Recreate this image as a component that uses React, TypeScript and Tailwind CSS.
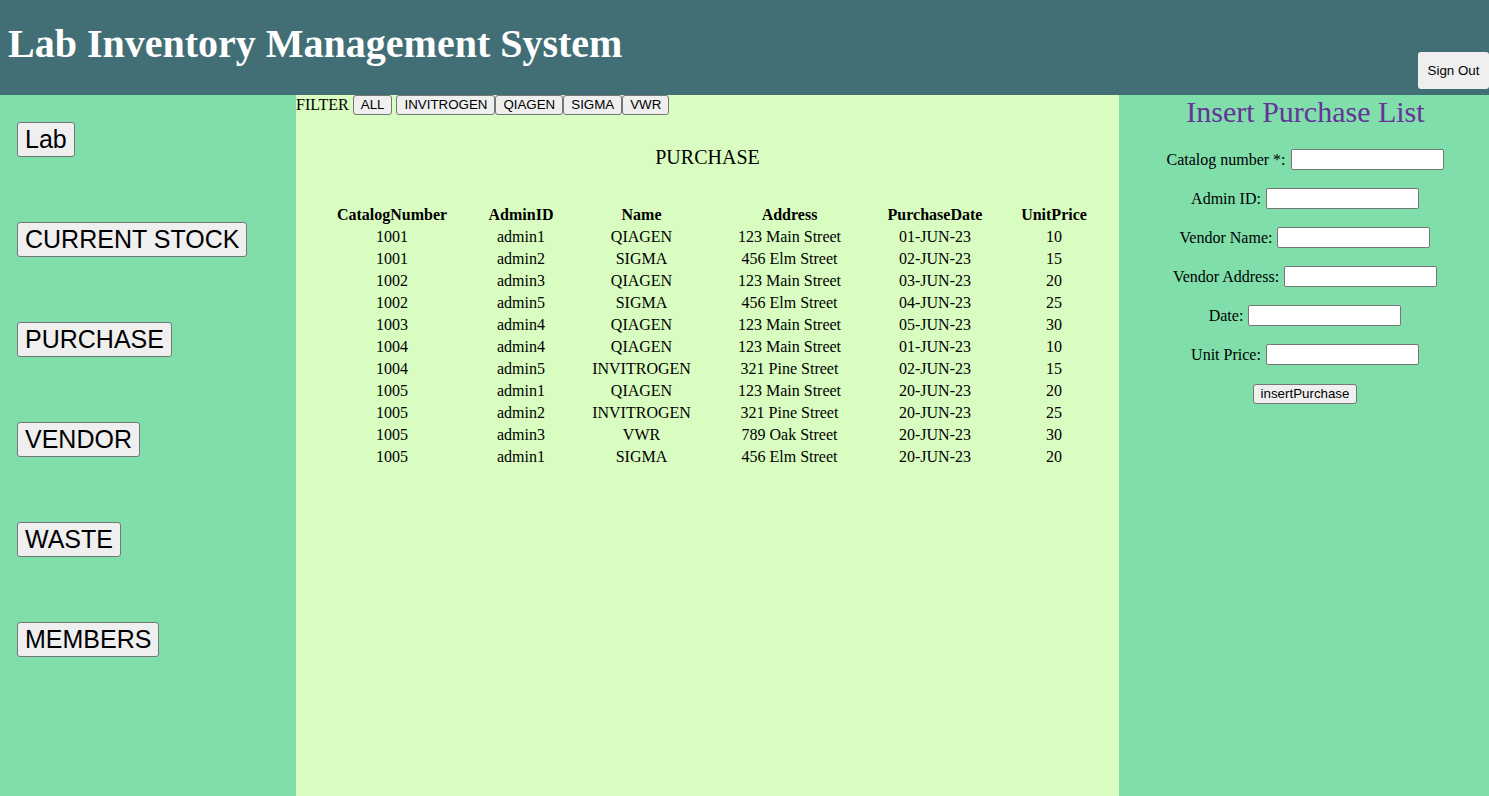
import React, { useState } from "react";

interface Purchase {
  catalog: number;
  admin: string;
  name: string;
  address: string;
  date: string;
  price: number;
}

const purchases: Purchase[] = [
  { catalog: 1001, admin: "admin1", name: "QIAGEN", address: "123 Main Street", date: "01-JUN-23", price: 10 },
  { catalog: 1001, admin: "admin2", name: "SIGMA", address: "456 Elm Street", date: "02-JUN-23", price: 15 },
  { catalog: 1002, admin: "admin3", name: "QIAGEN", address: "123 Main Street", date: "03-JUN-23", price: 20 },
  { catalog: 1002, admin: "admin5", name: "SIGMA", address: "456 Elm Street", date: "04-JUN-23", price: 25 },
  { catalog: 1003, admin: "admin4", name: "QIAGEN", address: "123 Main Street", date: "05-JUN-23", price: 30 },
  { catalog: 1004, admin: "admin4", name: "QIAGEN", address: "123 Main Street", date: "01-JUN-23", price: 10 },
  { catalog: 1004, admin: "admin5", name: "INVITROGEN", address: "321 Pine Street", date: "02-JUN-23", price: 15 },
  { catalog: 1005, admin: "admin1", name: "QIAGEN", address: "123 Main Street", date: "20-JUN-23", price: 20 },
  { catalog: 1005, admin: "admin2", name: "INVITROGEN", address: "321 Pine Street", date: "20-JUN-23", price: 25 },
  { catalog: 1005, admin: "admin3", name: "VWR", address: "789 Oak Street", date: "20-JUN-23", price: 30 },
  { catalog: 1005, admin: "admin1", name: "SIGMA", address: "456 Elm Street", date: "20-JUN-23", price: 20 },
];

const navItems = ["Lab", "CURRENT STOCK", "PURCHASE", "VENDOR", "WASTE", "MEMBERS"];

const formFields = [
  "Catalog number *:",
  "Admin ID:",
  "Vendor Name:",
  "Vendor Address:",
  "Date:",
  "Unit Price:",
];

// plain browser-default looking button
const smallBtn =
  "h-[20px] px-[7px] text-[13.33px] leading-[16px] font-['Liberation_Sans',Arial,sans-serif] text-black bg-[#efefef] border border-[#767676] rounded-[3px] align-top";

const App = () => {
  const [filter, setFilter] = useState("ALL");

  const rows =
    filter === "ALL" ? purchases : purchases.filter((p) => p.name === filter);

  return (
    <div className="h-screen flex flex-col font-['Liberation_Serif','Times_New_Roman',serif] text-black">
      {/* Header */}
      <header className="h-[95px] shrink-0 bg-[#426f75] flex justify-between">
        <h1 className="pl-[8px] pt-[21px] text-[40px] leading-[46px] font-bold text-white">
          Lab Inventory Management System
        </h1>
        <button className="self-end mb-[6px] h-[37px] w-[71px] bg-[#efefef] rounded-[3px] text-[13.33px] font-['Liberation_Sans',Arial,sans-serif] text-black">
          Sign Out
        </button>
      </header>

      <div className="flex-1 flex min-h-0">
        {/* Sidebar */}
        <nav className="w-[296px] shrink-0 bg-[#7fdeaa] pt-[27px] pl-[17px] flex flex-col items-start gap-[65px]">
          {navItems.map((item) => (
            <button
              key={item}
              className="h-[35px] px-[7px] text-[25px] leading-[29px] font-['Liberation_Sans',Arial,sans-serif] text-black bg-[#efefef] border border-[#767676] rounded-[3px]"
            >
              {item}
            </button>
          ))}
        </nav>

        {/* Main */}
        <main className="flex-1 bg-[#d9fdc1]">
          <div className="h-[21px] text-[16px] leading-[20px] whitespace-nowrap">
            FILTER{" "}
            <button className={smallBtn} onClick={() => setFilter("ALL")}>
              ALL
            </button>{" "}
            <button className={smallBtn} onClick={() => setFilter("INVITROGEN")}>
              INVITROGEN
            </button>
            <button className={smallBtn} onClick={() => setFilter("QIAGEN")}>
              QIAGEN
            </button>
            <button className={smallBtn} onClick={() => setFilter("SIGMA")}>
              SIGMA
            </button>
            <button className={smallBtn} onClick={() => setFilter("VWR")}>
              VWR
            </button>
          </div>

          <h3 className="mt-[30px] text-center text-[20px] leading-[22px]">PURCHASE</h3>

          <table className="mx-auto mt-[36px] border-collapse text-[16px] leading-[22px] text-center">
            <thead>
              <tr className="h-[22px] font-bold">
                <th className="w-[161px] p-0">CatalogNumber</th>
                <th className="w-[97px] p-0">AdminID</th>
                <th className="w-[144px] p-0">Name</th>
                <th className="w-[152px] p-0">Address</th>
                <th className="w-[139px] p-0">PurchaseDate</th>
                <th className="w-[99px] p-0">UnitPrice</th>
              </tr>
            </thead>
            <tbody>
              {rows.map((p, i) => (
                <tr key={i} className="h-[22px]">
                  <td className="p-0">{p.catalog}</td>
                  <td className="p-0">{p.admin}</td>
                  <td className="p-0">{p.name}</td>
                  <td className="p-0">{p.address}</td>
                  <td className="p-0">{p.date}</td>
                  <td className="p-0">{p.price}</td>
                </tr>
              ))}
            </tbody>
          </table>
        </main>

        {/* Insert form */}
        <aside className="w-[370px] shrink-0 bg-[#7fdeaa] flex flex-col items-center">
          <h2 className="pl-[3px] text-[30px] leading-[34px] text-[#663399]">Insert Purchase List</h2>
          <form
            className="mt-[20px] pl-[2px] flex flex-col items-center gap-[18px] text-[16px]"
            onSubmit={(e) => e.preventDefault()}
          >
            {formFields.map((label) => (
              <div key={label} className="h-[21px] flex items-center gap-[5px]">
                <label>{label}</label>
                <input
                  type="text"
                  className="w-[153px] h-[21px] bg-white border border-[#767676] rounded-[2px] px-[2px] text-[13px]"
                />
              </div>
            ))}
            <button type="submit" className={smallBtn + " mt-[1px]"}>
              insertPurchase
            </button>
          </form>
        </aside>
      </div>
    </div>
  );
};

export default App;
